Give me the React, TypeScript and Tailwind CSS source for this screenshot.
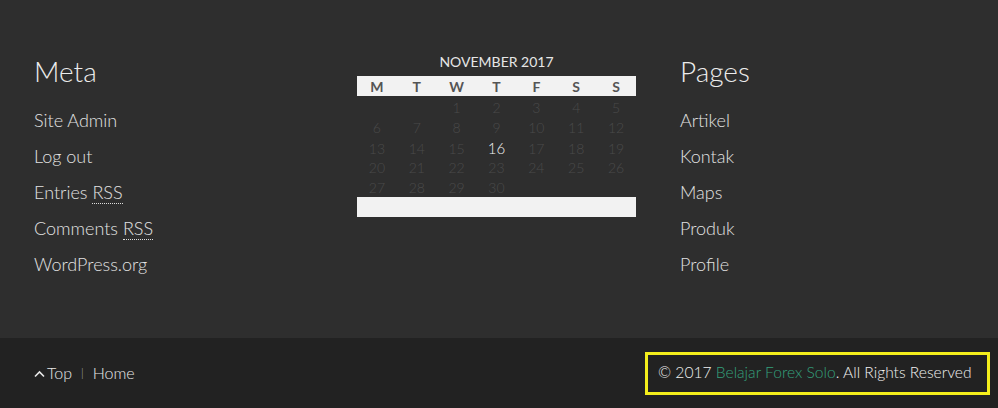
import type { ReactNode } from 'react'

const font = { fontFamily: 'Lato, "Open Sans", sans-serif' }

const rss = <abbr className="no-underline border-b border-dotted border-[#ddd]">RSS</abbr>

const metaLinks: ReactNode[] = [
  'Site Admin',
  'Log out',
  <span>Entries {rss}</span>,
  <span>Comments {rss}</span>,
  'WordPress.org',
]

const pages = ['Artikel', 'Kontak', 'Maps', 'Produk', 'Profile']

const days = ['M', 'T', 'W', 'T', 'F', 'S', 'S']

// november 2017 starts on a wednesday
const weeks: (number | null)[][] = [
  [null, null, 1, 2, 3, 4, 5],
  [6, 7, 8, 9, 10, 11, 12],
  [13, 14, 15, 16, 17, 18, 19],
  [20, 21, 22, 23, 24, 25, 26],
  [27, 28, 29, 30, null, null, null],
]

function Widget({ title, items }: { title: string; items: ReactNode[] }) {
  return (
    <div className="w-[293px]">
      <h3 className="mt-[5px] h-[33px] leading-[33px] text-[28px] font-light text-[#ececec]">{title}</h3>
      <ul className="mt-[14px]">
        {items.map((it, i) => (
          <li key={i} className="h-9 flex items-center text-[18px] font-light text-[#e2e2e2]">
            {it}
          </li>
        ))}
      </ul>
    </div>
  )
}

function Calendar() {
  return (
    <div className="w-[279px]">
      <div className="h-[22px] mb-[4px] flex items-center justify-center text-[14px] text-[#e6e6e6]">
        NOVEMBER 2017
      </div>
      <div className="grid grid-cols-7 h-[20px] bg-[#f2f2f2]">
        {days.map((d, i) => (
          <div key={i} className="flex items-center justify-center text-[14px] font-bold text-[#555]">
            {d}
          </div>
        ))}
      </div>
      <div className="pt-px">
        {weeks.map((w, r) => (
          <div key={r} className="grid grid-cols-7 h-[20px]">
            {w.map((n, c) => (
              <div
                key={c}
                className={
                  n === 16
                    ? 'flex items-center justify-center text-[15px] font-light text-[#f2f2f2]'
                    : 'flex items-center justify-center text-[14px] font-light text-[#4a4a4a]'
                }
              >
                {n ?? ''}
              </div>
            ))}
          </div>
        ))}
      </div>
      <div className="h-[20px] bg-[#f2f2f2]" />
    </div>
  )
}

export default function App() {
  return (
    <div style={font} className="w-[998px] h-[408px] bg-[#2e2e2e] flex flex-col">
      <section className="flex gap-[30px] pl-[34px] pt-[50px] h-[338px]">
        <Widget title="Meta" items={metaLinks} />
        <Calendar />
        <div className="ml-[14px]">
          <Widget title="Pages" items={pages} />
        </div>
      </section>
      <footer className="h-[70px] bg-[#222222] flex items-center justify-between pl-[34px] pr-[8px]">
        <div className="flex items-center text-[16px] font-light text-[#e8e8e8]">
          <svg width="11" height="8" viewBox="0 0 11 8" className="mr-[2px] mt-[1px]">
            <path d="M1 6.5 L5.5 2 L10 6.5" stroke="#e8e8e8" strokeWidth="1.6" fill="none" />
          </svg>
          <span>Top</span>
          <span className="mx-[9px] text-[11px] text-[#bbb]">|</span>
          <span>Home</span>
        </div>
        <div className="w-[345px] border-[3px] border-[#f4ee1c] h-[43px] pl-[10px] flex items-center whitespace-nowrap text-[15.6px] font-light text-[#f0f0f0]">
          © 2017&nbsp;<span className="text-[#34a07c]">Belajar Forex Solo</span>. All Rights Reserved
        </div>
      </footer>
    </div>
  )
}
